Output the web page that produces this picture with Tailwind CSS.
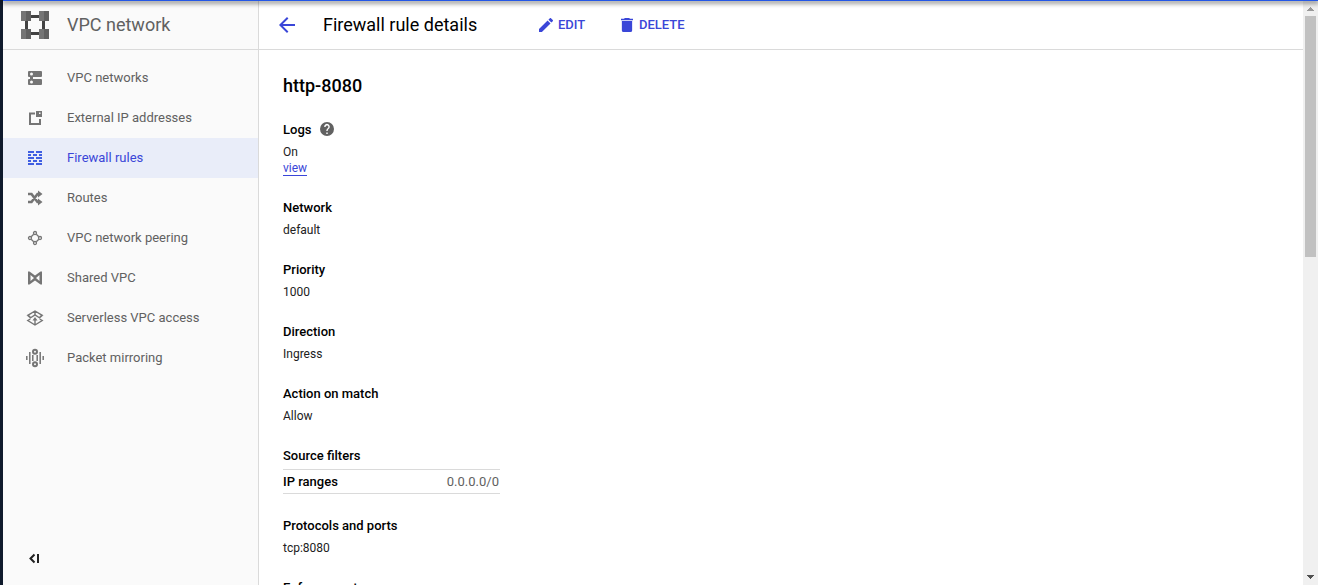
<!DOCTYPE html>
<html lang="en">
<head>
<meta charset="utf-8">
<title>Firewall rule details</title>
<script src="https://cdn.jsdelivr.net/npm/@tailwindcss/browser@4"></script>
</head>
<body class="relative flex h-[585px] w-[1318px] overflow-hidden bg-white font-['Roboto',sans-serif] text-[12px] leading-4 text-[#212121]">
<div class="w-[3px] shrink-0 bg-[#0f1a2c]"></div>
<aside class="flex w-64 shrink-0 flex-col border-r border-[#dadada] bg-[#fafafa] text-[#616161]">
  <header class="flex h-[50px] shrink-0 items-center border-b border-[#dadada] pl-[18px]">
    <svg class="size-7" viewBox="0 0 28 28" shape-rendering="crispEdges"><path fill="#424242" d="M10 4h8v3h-8zM10 21h8v3h-8zM4 10h3v8H4zM21 10h3v8h-3z"/><path fill="#757575" d="M0 0h10v10H0zM18 0h10v10H18zM0 18h10v10H0zM18 18h10v10H18z"/><path fill="#616161" d="M5 0h5v10H5zM23 0h5v10h-5zM5 18h5v10H5zM23 18h5v10h-5z"/></svg>
    <h1 class="ml-[18px] text-[18px] leading-6">VPC network</h1>
  </header>
  <nav class="flex flex-col pt-2 text-[13px]">
    <a class="flex h-10 items-center pl-[23px]"><svg class="mr-[17px] h-[18px] w-6" viewBox="0 0 24 18"><path fill="#757575" fill-rule="evenodd" d="M3 2h12a1 1 0 0 1 1 1v4a1 1 0 0 1-1 1h-8v2h8a1 1 0 0 1 1 1v4a1 1 0 0 1-1 1H3a1 1 0 0 1-1-1v-4a1 1 0 0 1 1-1h1V8H3a1 1 0 0 1-1-1V3a1 1 0 0 1 1-1zM5.500 3.500a1.500 1.500 0 1 0 0 3 1.500 1.500 0 0 0 0-3zM5.500 11.500a1.500 1.500 0 1 0 0 3 1.500 1.500 0 0 0 0-3z"/></svg>VPC networks</a>
    <a class="flex h-10 items-center pl-[23px]"><svg class="mr-[17px] h-[18px] w-6" viewBox="0 0 24 18"><path fill="none" stroke="#757575" stroke-width="2" d="M9 4.500H4V15h10V10"/><path fill="#757575" fill-rule="evenodd" d="M10 2h6v6h-6zM13 3.500V5h1.500V3.500z"/></svg>External IP addresses</a>
    <a class="flex h-10 items-center bg-[#e9edf9] pl-[23px] text-[#3a46d8]"><svg class="mr-[17px] h-[18px] w-6" viewBox="0 0 24 18" shape-rendering="crispEdges"><path fill="#3f5ee2" d="M2 2h6v2H2zM10 2h6v2h-6zM2 5h3v2H2zM7 5h4v2H7zM13 5h3v2h-3zM2 8h6v2H2zM10 8h6v2h-6zM2 11h3v2H2zM7 11h4v2H7zM13 11h3v2h-3zM2 14h6v2H2zM10 14h6v2h-6z"/></svg>Firewall rules</a>
    <a class="flex h-10 items-center pl-[23px]"><svg class="mr-[17px] h-[18px] w-6" viewBox="0 0 24 18"><path fill="none" stroke="#757575" stroke-width="2.600" d="M2 5h3.500l6 8H14M2 13h3.500l6-8H14"/><path fill="#757575" d="M12 1.500L16.500 5 12 8.500zM12 9.500l4.500 3.500-4.500 3.500z"/></svg>Routes</a>
    <a class="flex h-10 items-center pl-[23px]"><svg class="mr-[17px] h-[18px] w-6" viewBox="0 0 24 18"><g fill="none" stroke="#757575" stroke-width="1.300"><path d="M5.200 7.700l2.500-2.500M10.300 5.200l2.500 2.500M12.800 10.300l-2.500 2.500M7.700 12.800l-2.500-2.500"/><circle cx="9" cy="4" r="1.500"/><circle cx="14" cy="9" r="1.500"/><circle cx="9" cy="14" r="1.500"/><circle cx="4" cy="9" r="1.500"/></g></svg>VPC network peering</a>
    <a class="flex h-10 items-center pl-[23px]"><svg class="mr-[17px] h-[18px] w-6" viewBox="0 0 24 18"><path fill="#757575" fill-rule="evenodd" d="M2 2.500h1.500L9 6.500l5.500-4H16v13h-1.500L9 11.500l-5.500 4H2zM4.500 6v6L8 9zM13.500 6v6L10 9z"/></svg>Shared VPC</a>
    <a class="flex h-10 items-center pl-[23px]"><svg class="mr-[17px] h-[18px] w-6" viewBox="0 0 24 18"><g fill="none" stroke="#757575" stroke-width="1.400"><path d="M4.300 7.900L1.800 6.300 9 2l7.200 4.300-2.500 1.600M9 2v3.500M5 8.500l4-2.700 4 2.700M4.300 10L1.800 11.500 9 16l7.200-4.500-2.500-1.500M1.800 6.500l3.200 2.800M16.200 6.500L13 9.300M9 15.500V10"/></g><path fill="#757575" d="M9 8l2.500 3.500h-5z"/></svg>Serverless VPC access</a>
    <a class="flex h-10 items-center pl-[23px]"><svg class="mr-[17px] h-[18px] w-6 overflow-visible" viewBox="0 0 24 18"><g fill="none" stroke="#757575" stroke-width="1.500"><path d="M.8 7v4M3.800 3v12M14.200 3v12M17.200 7v4M6.800 6v6M11.200 6v6"/><g stroke-width="2"><circle cx="9" cy="2.800" r="2"/><circle cx="9" cy="15.200" r="2"/></g></g></svg>Packet mirroring</a>
  </nav>
  <button class="mt-auto mb-[21px] ml-[26px] w-3"><svg class="h-[11px] w-3" viewBox="0 0 12 11"><path fill="none" stroke="#212121" stroke-width="2" d="M5.500 1.500l-4 4 4 4M9 1v9"/></svg></button>
</aside>
<main class="flex min-w-0 flex-1 flex-col">
  <header class="flex h-[50px] shrink-0 items-center border-b border-[#dadada] pl-5 text-[13px] font-medium text-[#3a46d8]">
    <svg class="size-4" viewBox="0 0 16 16"><path fill="#3a46d8" d="M16 7H3.830l5.590-5.590L8 0 0 8l8 8 1.410-1.410L3.830 9H16z"/></svg>
    <h2 class="ml-7 w-[216px] text-[18px] leading-6 font-normal text-black">Firewall rule details</h2>
    <svg class="size-[14px]" viewBox="3 3 18 18"><path fill="#3a46d8" d="M3 17.250V21h3.750L17.810 9.940l-3.750-3.750L3 17.250zM20.710 7.040a1 1 0 0 0 0-1.410l-2.340-2.340a1 1 0 0 0-1.410 0l-1.830 1.830 3.750 3.750 1.830-1.830z"/></svg>
    <span class="ml-[5px] w-[63px]">EDIT</span>
    <svg class="h-[14px] w-3" viewBox="5 3 14 18" preserveAspectRatio="none"><path fill="#3a46d8" d="M6 19a2 2 0 0 0 2 2h8a2 2 0 0 0 2-2V7H6v12zM19 4h-3.500l-1-1h-5l-1 1H5v2h14V4z"/></svg>
    <span class="ml-[6px]">DELETE</span>
  </header>
  <div class="flex flex-col px-6 pt-6">
    <h3 class="text-[18px] leading-6 font-medium text-black">http-8080</h3>
    <section class="mt-[22px] mb-[22px]">
      <h4 class="flex h-5 items-center text-[13px] font-medium text-black">Logs<svg class="mb-0.5 ml-[9px] size-[14px]" viewBox="2 2 20 20"><path fill="#616161" d="M12 2a10 10 0 1 0 0 20 10 10 0 0 0 0-20zm1 17h-2v-2h2v2zm2.070-7.750l-.9.920C13.450 12.900 13 13.500 13 15h-2v-.5c0-1.100.450-2.100 1.170-2.830l1.240-1.260A2 2 0 1 0 10 9H8a4 4 0 1 1 7.070 2.250z"/></svg></h4>
      <p class="mt-1">On</p>
      <a class="block h-4 w-6 border-b border-[#3a46d8] text-[#3a46d8]">view</a>
    </section>
    <section class="mb-[22px]"><h4 class="text-[13px] leading-5 font-medium text-black">Network</h4><p class="mt-1">default</p></section>
    <section class="mb-[22px]"><h4 class="text-[13px] leading-5 font-medium text-black">Priority</h4><p class="mt-1">1000</p></section>
    <section class="mb-[22px]"><h4 class="text-[13px] leading-5 font-medium text-black">Direction</h4><p class="mt-1">Ingress</p></section>
    <section class="mb-[22px]"><h4 class="text-[13px] leading-5 font-medium text-black">Action on match</h4><p class="mt-1">Allow</p></section>
    <section class="mb-[22px]"><h4 class="text-[13px] leading-5 font-medium text-black">Source filters</h4>
      <div class="mt-[3px] flex h-[25px] w-[217px] items-center justify-between border-y border-[#dadada] pr-px text-[13px]"><span class="font-medium text-black">IP ranges</span><span class="text-[#616161]">0.0.0.0/0</span></div>
    </section>
    <section class="mb-[22px]"><h4 class="text-[13px] leading-5 font-medium text-black">Protocols and ports</h4><p class="mt-1">tcp:8080</p></section>
    <h4 class="text-[13px] leading-5 font-medium text-black">Enforcement</h4>
  </div>
</main>
<div class="flex w-[15px] shrink-0 flex-col items-center bg-[#f0f0f0]">
  <svg class="mt-[7px] h-1 w-[7px] shrink-0" viewBox="0 0 7 4"><path fill="#999" d="M3 0h1v1h1v1h1v1h1v1H0V3h1V2h1V1h1z"/></svg>
  <div class="mt-[5px] h-[241px] w-[11px] shrink-0 bg-[#c1c1c1]"></div>
  <svg class="mt-auto mb-[6px] h-1 w-[7px] shrink-0" viewBox="0 0 7 4"><path fill="#505050" d="M0 0h7v1H6v1H5v1H4v1H3V3H2V2H1V1H0z"/></svg>
</div>
<div class="absolute top-0 right-0 left-[3px] h-px bg-[#2457e6] shadow-[0_1px_5px_1px_rgba(0,0,0,0.6)]"></div>
</body>
</html>
